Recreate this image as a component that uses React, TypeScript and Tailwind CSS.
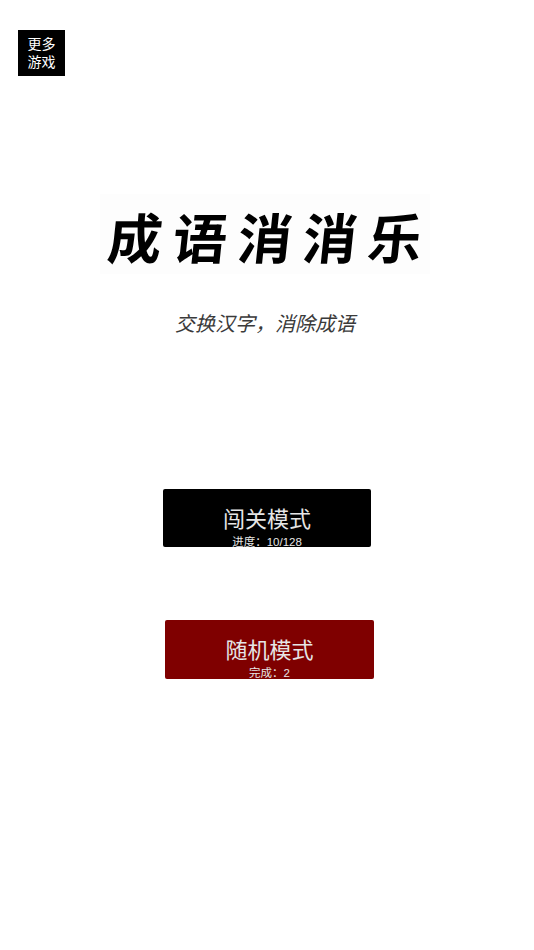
import React from 'react';

const cjk = "font-['Liberation_Sans','Noto_Sans_CJK_SC',sans-serif]";
const titleChars = ['成', '语', '消', '消', '乐'];

export default function App() {
  return (
    <div className={`min-h-[950px] bg-white flex flex-col ${cjk}`}>
      <div className="pt-[30px] pl-[18px]">
        <button className="w-[47px] h-[46px] bg-black text-white text-[14px] leading-[18px] flex items-center justify-center text-center">
          更多
          <br />
          游戏
        </button>
      </div>

      <h1 className="mt-[118px] ml-[100px] w-[330px] h-[80px] pt-[12px] bg-[#fdfdfd] flex items-center justify-center text-[54px] leading-none font-bold text-black whitespace-nowrap gap-[11px]">
        {titleChars.map((c, i) => (
          <span key={i} className="-skew-x-6">
            {c}
          </span>
        ))}
      </h1>

      <p className="mt-[36px] ml-[175px] text-[20px] leading-[28px] italic text-[#3a3a3a] whitespace-nowrap">
        交换汉字，消除成语
      </p>

      <button className="mt-[151px] ml-[163px] w-[208px] h-[58px] bg-black rounded-[2px] text-[#e6e6e6] flex flex-col items-center justify-end overflow-hidden">
        <span className="text-[22px] leading-[26px]">闯关模式</span>
        <span className="text-[11.5px] leading-[13px] mt-[3px] -mb-[2px]">进度：10/128</span>
      </button>

      <button className="mt-[73px] ml-[165px] w-[209px] h-[59px] bg-[#7f0000] rounded-[2px] text-[#e6e6e6] flex flex-col items-center justify-end overflow-hidden">
        <span className="text-[22px] leading-[26px]">随机模式</span>
        <span className="text-[11.5px] leading-[13px] mt-[3px] -mb-[1px]">完成：2</span>
      </button>
    </div>
  );
}
